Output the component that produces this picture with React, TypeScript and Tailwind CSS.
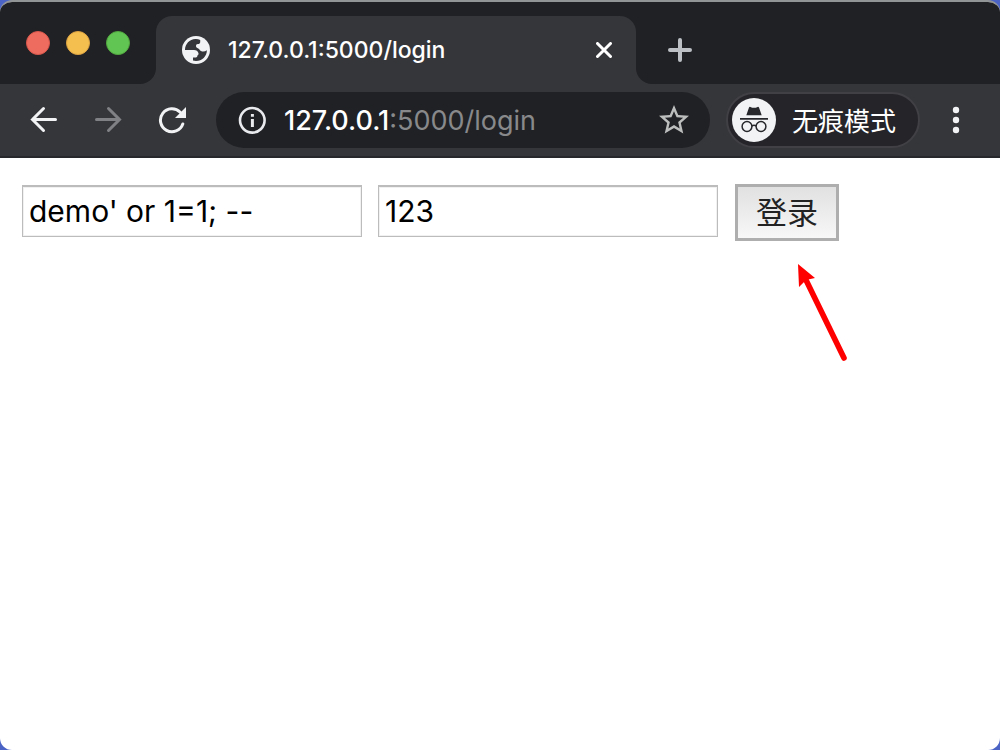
import { useState } from "react";
import type { SVGProps } from "react";

function Icon(props: SVGProps<SVGSVGElement>) {
  return <svg aria-hidden="true" fill="none" {...props} />;
}

function TrafficLights() {
  const base = "size-6 rounded-full border";
  return (
    <div className="flex w-39 gap-4 pt-[15px] pl-6.5 shrink-0">
      <button aria-label="Close window" className={base + " border-[#d8574c] bg-[#ed6b5f]"} />
      <button aria-label="Minimize window" className={base + " border-[#dca243] bg-[#f5bf4f]"} />
      <button aria-label="Zoom window" className={base + " border-[#51a73e] bg-[#61c554]"} />
    </div>
  );
}

function Globe() {
  return (
    <Icon className="size-7 shrink-0" viewBox="0 0 28 28">
      <circle cx="14" cy="14" r="14" fill="#f1f3f4" />
      <path
        d="M3 14C3 8 7.6 3.2 13.4 3H14C15.4 3 17 3.3 18.2 3.9V6C18.2 7.4 17.2 8 15.8 8C14.6 8 14 8.9 14 10C14 11.4 15 12.1 16.2 12.4C17.6 12.8 17.6 14.2 19 15C21 16.1 23 15.6 24.9 14.2C24.9 20.2 20 25 14 25C13 25 12 24.9 11 24.6V21.6H13C14.6 21.6 15.4 20.8 15.4 19.4C16.4 19 16.8 18.2 16.4 17C15.8 15.2 14.4 14 12 14Z"
        fill="#35363a"
      />
    </Icon>
  );
}

function TabStrip() {
  return (
    <div className="flex h-[82px] bg-[#202124] pt-3.5">
      <TrafficLights />
      <div className="relative -mt-0 flex min-w-0 w-120 items-center rounded-t-2xl bg-[#35363a] px-6.5">
        <Icon className="absolute bottom-0 -left-4 size-4" viewBox="0 0 16 16">
          <path d="M16 0V16H0A16 16 0 0 0 16 0Z" fill="#35363a" />
        </Icon>
        <Icon className="absolute -right-4 bottom-0 size-4" viewBox="0 0 16 16">
          <path d="M0 0V16H16A16 16 0 0 1 0 0Z" fill="#35363a" />
        </Icon>
        <Globe />
        <span className="ml-4.5 flex-1 truncate text-[23px] leading-8 font-medium text-white">127.0.0.1:5000/login</span>
        <button aria-label="Close tab" className="-mr-2 flex size-7 items-center justify-center">
          <Icon className="size-4" viewBox="0 0 16 16" stroke="#fff" strokeWidth="3" strokeLinecap="round">
            <path d="M1.5 1.5L14.5 14.5M14.5 1.5L1.5 14.5" />
          </Icon>
        </button>
      </div>
      <button aria-label="New tab" className="ml-7 flex w-8 items-center justify-center">
        <Icon className="size-6" viewBox="0 0 24 24" stroke="#bdc1c6" strokeWidth="4" strokeLinecap="round">
          <path d="M2 12H22M12 2V22" />
        </Icon>
      </button>
    </div>
  );
}

function Toolbar() {
  return (
    <div className="flex h-[74px] items-center border-b-2 border-[#27282b] bg-[#35363a]">
      <button aria-label="Back" className="ml-7 flex size-8 items-center justify-center">
        <Icon className="size-7" viewBox="0 0 28 28" stroke="#f1f3f4" strokeWidth="3" strokeLinecap="round">
          <path d="M25.5 13.5H2.5M13.5 2.5L2.5 13.5L13.5 24.5" />
        </Icon>
      </button>
      <button aria-label="Forward" className="ml-8 flex size-8 items-center justify-center">
        <Icon className="size-7" viewBox="0 0 28 28" stroke="#808184" strokeWidth="3" strokeLinecap="round">
          <path d="M2.5 13.5H25.5M14.5 2.5L25.5 13.5L14.5 24.5" />
        </Icon>
      </button>
      <button aria-label="Reload" className="ml-8 flex size-8 items-center justify-center">
        <Icon className="size-7" viewBox="0 0 28 28">
          <path d="M24.8 18A11.5 11.5 0 1 1 22.2 6.2" stroke="#f1f3f4" strokeWidth="3" strokeLinecap="round" />
          <path d="M28 1V12H17Z" fill="#f1f3f4" />
        </Icon>
      </button>
      <div className="ml-7 flex h-14 min-w-0 w-[494px] items-center rounded-full bg-[#202124] px-5">
        <button aria-label="View site information" className="flex size-8 shrink-0 items-center justify-center">
          <Icon className="size-7" viewBox="0 0 28 28">
            <circle cx="14.3" cy="14.3" r="12.3" stroke="#e8eaed" strokeWidth="2.6" />
            <path d="M12.9 8H15.9V10.8H12.9ZM12.9 13H15.9V21H12.9Z" fill="#e8eaed" />
          </Icon>
        </button>
        <span className="ml-4 flex-1 truncate pt-0.5 text-[27px] leading-9 text-[#88898b]">
          <span className="font-medium text-white">127.0.0.1</span>:5000/login
        </span>
        <button aria-label="Bookmark this tab" className="flex size-8 items-center justify-center">
          <Icon className="size-9 shrink-0" viewBox="0 0 24 24">
            <path
              fill="#bcbebe"
              d="M22 9.24l-7.19-.62L12 2 9.19 8.63 2 9.24l5.46 4.73L5.82 21 12 17.27 18.18 21l-1.63-7.03L22 9.24zM12 15.4l-3.76 2.27 1-4.28-3.32-2.88 4.38-.38L12 6.1l1.71 4.04 4.38.38-3.32 2.88 1 4.28L12 15.4z"
            />
          </Icon>
        </button>
      </div>
      <button className="ml-4 flex h-14 shrink-0 items-center rounded-full border-2 border-[#414145] bg-[#252529] pr-[22px] pl-1">
        <Icon className="size-11" viewBox="0 0 44 44">
          <circle cx="22" cy="22" r="22" fill="#f1f3f4" />
          <path d="M14.3 17.3L17 9.6Q17.4 8.6 18.4 8.9Q22 10.8 25.6 8.9Q26.6 8.6 27 9.6L29.7 17.3Z" fill="#27282c" />
          <path d="M8 20.9H36" stroke="#27282c" strokeWidth="1.8" />
          <g stroke="#27282c" strokeWidth="1.5">
            <circle cx="15" cy="28.5" r="4.9" />
            <circle cx="29" cy="28.5" r="4.9" />
            <path d="M19.8 28Q22 26.6 24.2 28" />
          </g>
        </Icon>
        <span className="ml-4 pt-1 text-[26px] leading-8 text-white">无痕模式</span>
      </button>
      <button aria-label="Menu" className="ml-5 flex size-8 items-center justify-center">
        <Icon className="h-7 w-2" viewBox="0 0 8 28">
          <g fill="#f1f3f4">
            <circle cx="4" cy="4" r="3.2" />
            <circle cx="4" cy="14" r="3.2" />
            <circle cx="4" cy="24" r="3.2" />
          </g>
        </Icon>
      </button>
    </div>
  );
}

function LoginForm() {
  const [user, setUser] = useState("demo' or 1=1; --");
  const [password, setPassword] = useState("123");
  const field =
    "h-13 min-w-0 w-85 border border-t-2 border-[#bcbcbc] bg-white px-1.5 text-[30px] leading-9 text-black outline-none shadow-[inset_0_0_0_1px_#f1f1f1]";
  return (
    <form className="flex items-center gap-4 px-5.5 pt-6.5" onSubmit={(e) => e.preventDefault()}>
      <div className="flex min-w-0 gap-4 pb-1">
        <input aria-label="Username" className={field} value={user} onChange={(e) => setUser(e.target.value)} />
        <input aria-label="Password" className={field} value={password} onChange={(e) => setPassword(e.target.value)} />
      </div>
      <div className="relative ml-px shrink-0">
        <button
          type="submit"
          className="block h-[57px] w-26 border-3 border-[#aeaeae] bg-linear-to-b from-[#e1e1e1] to-[#f7f7f7] text-[31px] leading-9 text-[#222]"
        >
          登录
        </button>
        <Icon className="absolute top-19 left-14 h-26 w-14" viewBox="0 0 56 104">
          <path d="M15 20L53 98" stroke="#f00" strokeWidth="5.6" strokeLinecap="round" />
          <path d="M7 4L24 18L15 20L8 27Z" fill="#f00" />
        </Icon>
      </div>
    </form>
  );
}

export default function App() {
  return (
    <div className="min-h-screen bg-[#4a63c4] font-[Inter,'Noto_Sans_CJK_SC',sans-serif]">
      <div className="min-h-screen overflow-hidden rounded-xl border-t-2 border-[#929596] bg-white">
        <TabStrip />
        <Toolbar />
        <LoginForm />
      </div>
    </div>
  );
}
